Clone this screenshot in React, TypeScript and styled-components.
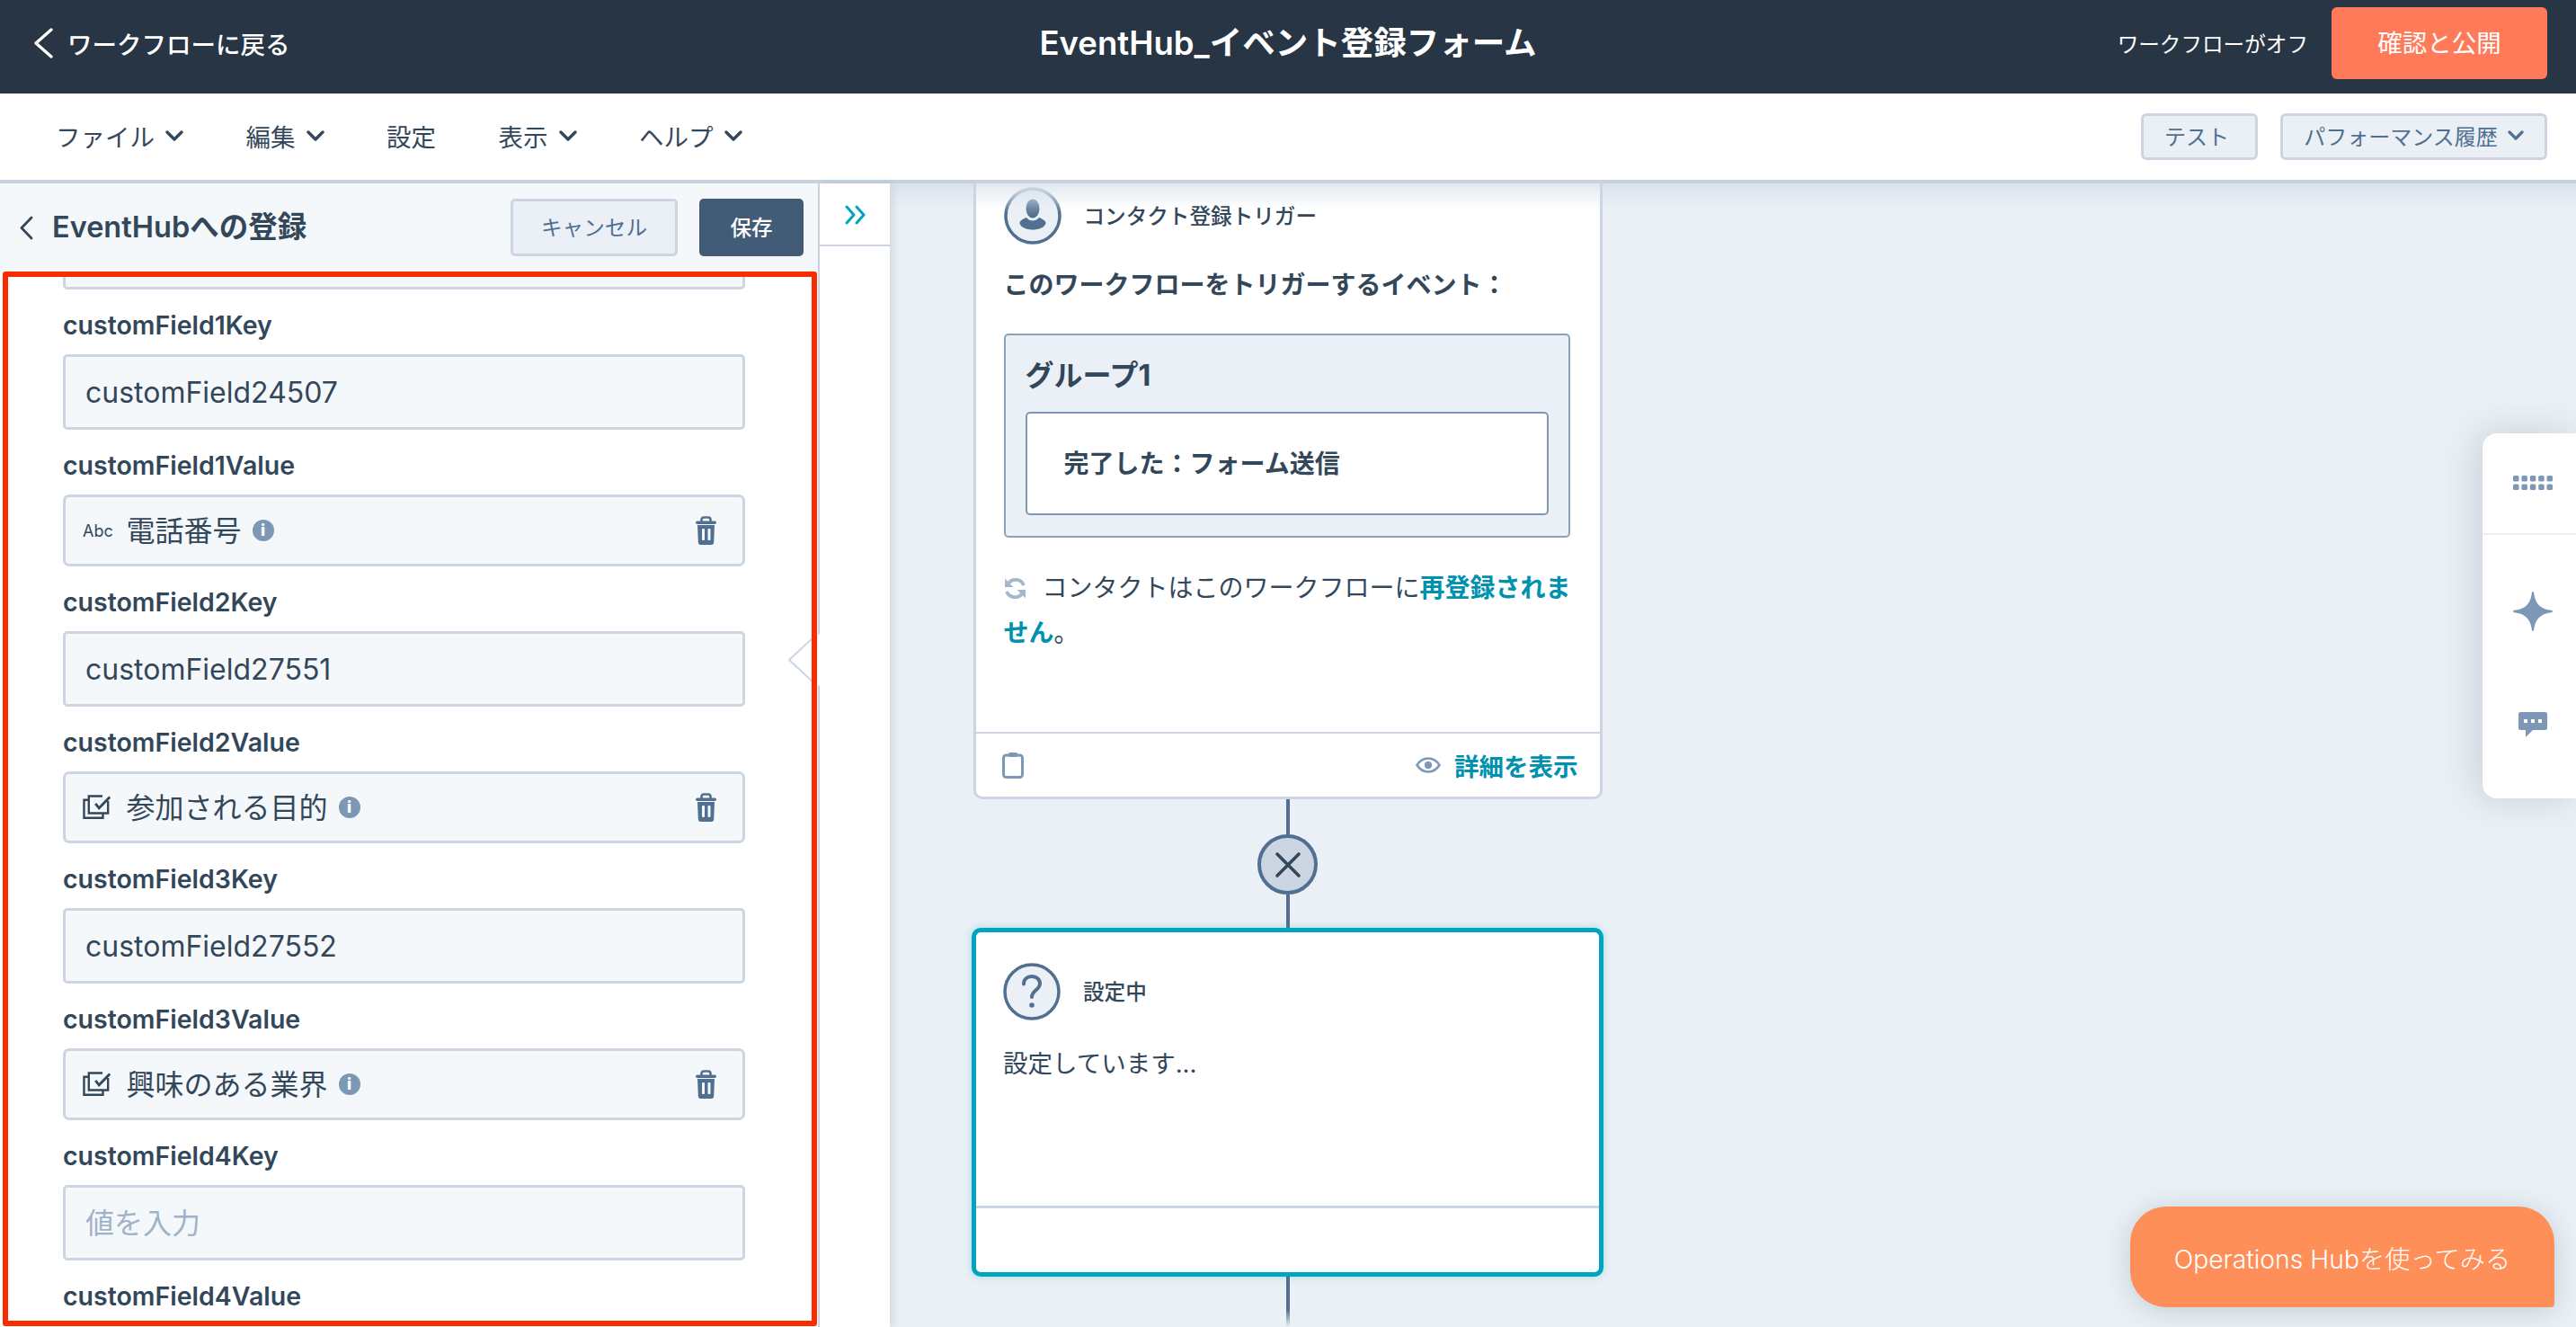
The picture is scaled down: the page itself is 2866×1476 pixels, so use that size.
import React from "react";
import styled, { createGlobalStyle } from "styled-components";

const FONT = `"Inter", "Noto Sans CJK JP", sans-serif`;

const Global = createGlobalStyle`
  html, body { margin: 0; padding: 0; width: 2866px; height: 1476px; overflow: hidden; background: #eaf0f6; }
  #root { width: 2866px; height: 1476px; }
  * { box-sizing: border-box; }
`;

const Page = styled.div`
  width: 2866px;
  height: 1476px;
  display: flex;
  flex-direction: column;
  overflow: hidden;
  font-family: ${FONT};
  color: #33475b;
  font-size: 27.5px;
`;

const TopBar = styled.header`
  height: 104px;
  flex: none;
  background: #283545;
  color: #fff;
  display: grid;
  grid-template-columns: 1fr auto 1fr;
  align-items: center;
  padding: 0 32px 8px 32px;
`;

const BackLink = styled.div`
  display: flex;
  align-items: center;
  gap: 16px;
  font-weight: 500;
  padding-left: 6px;
`;

const WorkflowTitle = styled.h1`
  margin: 0;
  font-size: 36.5px;
  font-weight: 600;
  line-height: 50px;
`;

const TopRight = styled.div`
  display: flex;
  align-items: center;
  justify-content: flex-end;
  gap: 26px;
`;

const StatusText = styled.span`
  font-size: 23.6px;
`;

const PublishButton = styled.button`
  width: 240px;
  height: 80px;
  border: 0;
  border-radius: 6px;
  background: #ff7a59;
  color: #fff;
  font: 400 27.5px ${FONT};
  padding: 0 0 4px;
`;

const NavBar = styled.nav`
  height: 100px;
  flex: none;
  background: #fff;
  border-bottom: 4px solid #c6d3df;
  display: flex;
  align-items: center;
  justify-content: space-between;
  padding: 0 32px 0 62px;
`;

const Menu = styled.div`
  display: flex;
  align-items: center;
  gap: 69.5px;
  padding-bottom: 3px;
`;

const MenuItem = styled.div`
  display: flex;
  align-items: center;
  gap: 12px;
  color: #33475b;
`;

const NavActions = styled.div`
  display: flex;
  gap: 25px;
`;

const GhostButton = styled.button<{ $w: number; $pr?: number }>`
  width: ${(p) => p.$w}px;
  height: 52px;
  border: 3px solid #cbd6e2;
  border-radius: 6px;
  background: #eaf0f6;
  color: #516f90;
  font: 400 24px ${FONT};
  display: flex;
  align-items: center;
  justify-content: center;
  gap: 11px;
  padding: 0 ${(p) => p.$pr ?? 0}px 3px 0;
`;

const Main = styled.div`
  flex: 1;
  min-height: 0;
  display: flex;
`;

const SidePanel = styled.aside`
  width: 912px;
  flex: none;
  position: relative;
  display: flex;
  flex-direction: column;
  background: #fff;
  border-right: 2px solid #cbd6e2;
`;

const PanelHead = styled.div`
  height: 98px;
  flex: none;
  background: #f5f8fa;
  display: flex;
  align-items: center;
  padding: 0 16px 0 22px;
`;

const PanelTitle = styled.h2`
  margin: 0 0 0 21px;
  font-size: 32.5px;
  font-weight: 600;
  line-height: 44px;
  flex: 1;
`;

const CancelButton = styled.button`
  width: 186px;
  height: 64px;
  border: 3px solid #cbd6e2;
  border-radius: 5px;
  background: #eaf0f6;
  color: #516f90;
  font: 400 23.6px ${FONT};
  padding: 0 0 3px;
`;

const SaveButton = styled.button`
  width: 116px;
  height: 64px;
  margin-left: 24px;
  border: 0;
  border-radius: 5px;
  background: #425b76;
  color: #fff;
  font: 500 23.6px ${FONT};
  padding: 0 0 3px;
`;

const PanelBody = styled.div`
  flex: 1;
  min-height: 0;
  overflow: hidden;
  padding: 0 81px 0 70px;
`;

const ScrolledInput = styled.div`
  height: 20px;
  background: #f5f8fa;
  border: 3px solid #cbd6e2;
  border-top: 0;
  border-radius: 0 0 5px 5px;
`;

const FieldLabel = styled.label`
  display: block;
  margin: 20px 0 12px;
  font-size: 28.5px;
  line-height: 40px;
  font-weight: 600;
  color: #33475b;
`;

const TextBox = styled.div<{ $placeholder?: boolean }>`
  height: 84px;
  display: flex;
  align-items: center;
  padding: 0 0 ${(p) => (p.$placeholder ? 5 : 0)}px 22px;
  background: #f5f8fa;
  border: 3px solid #cbd6e2;
  border-radius: 5px;
  font-size: 32px;
  font-weight: 400;
  color: ${(p) => (p.$placeholder ? "#9fb3c8" : "#33475b")};
`;

const TokenBox = styled.div`
  height: 80px;
  display: flex;
  align-items: center;
  padding: 0 29px 0 0;
  background: #f5f8fa;
  border: 3px solid #cbd6e2;
  border-radius: 7px;
  font-size: 32px;
  font-weight: 400;
`;

const TokenIcon = styled.span`
  width: 67.500px;
  padding-left: 19px;
  flex: none;
  display: flex;
  align-items: center;
  font-size: 18px;
  font-weight: 400;
  color: #33475b;
`;

const TokenText = styled.span`
  margin-bottom: 5px;
`;

const InfoDot = styled.span`
  width: 24px;
  height: 24px;
  margin-left: 12px;
  flex: none;
  border-radius: 50%;
  background: #7c98b6;
  color: #fff;
  font-size: 18px;
  font-weight: 800;
  line-height: 24px;
  text-align: center;
`;

const TrashSlot = styled.span`
  margin-left: auto;
  display: flex;
`;

const RedFrame = styled.div`
  position: absolute;
  left: 3px;
  top: 98px;
  width: 906px;
  height: 1173px;
  border: 6px solid #f92c00;
  border-radius: 3px;
  pointer-events: none;
  z-index: 3;
`;

const Pointer = styled.svg`
  position: absolute;
  left: 876px;
  top: 501px;
  z-index: 2;
`;

const CollapseColumn = styled.div`
  width: 78px;
  flex: none;
  background: #fff;
  box-shadow: 4px 0 8px rgba(45, 62, 80, 0.12);
  position: relative;
  z-index: 1;
`;

const CollapseHead = styled.div`
  height: 70px;
  border-bottom: 2px solid #cbd6e2;
  padding: 24px 0 0 28px;
  display: flex;
  align-items: flex-start;
`;

const Canvas = styled.section`
  flex: 1;
  min-width: 0;
  position: relative;
  overflow: hidden;
  background: #eaf0f6;
  padding-left: 91px;
  display: flex;
  flex-direction: column;
`;

const CanvasFade = styled.div`
  position: absolute;
  inset: 0 0 auto 0;
  height: 28px;
  background: linear-gradient(rgba(203, 214, 226, 0.55), rgba(234, 240, 246, 0));
  pointer-events: none;
  z-index: 2;
`;

const Flow = styled.div`
  width: 703px;
  display: flex;
  flex-direction: column;
  align-items: center;
`;

const TriggerCard = styled.article`
  width: 700px;
  height: 685px;
  flex: none;
  background: #fff;
  border: 3px solid #cbd6e2;
  border-top: 0;
  border-radius: 0 0 10px 10px;
  display: flex;
  flex-direction: column;
`;

const TriggerBody = styled.div`
  flex: 1;
  padding: 4px 33px 0 31px;
`;

const CardHead = styled.div`
  height: 64px;
  display: flex;
  align-items: center;
  gap: 25px;
`;

const CardTitle = styled.span`
  font-size: 23.6px;
  font-weight: 500;
  margin-bottom: 2px;
`;

const Intro = styled.p`
  margin: 25px 0 0;
  line-height: 40px;
  font-size: 28px;
  font-weight: 600;
`;

const GroupBox = styled.div`
  margin: 34px 0 0;
  height: 227px;
  background: #eaf0f6;
  border: 2px solid #8aa2bd;
  border-radius: 5px;
  padding: 25px 22px 0;
`;

const GroupTitle = styled.div`
  font-size: 32px;
  line-height: 40px;
  font-weight: 700;
`;

const FilterBox = styled.div`
  margin-top: 20px;
  height: 115px;
  background: #fff;
  border: 2px solid #7c98b6;
  border-radius: 5px;
  display: flex;
  align-items: center;
  padding: 0 0 3px 41px;
  font-size: 28px;
  font-weight: 700;
`;

const Reenroll = styled.p`
  margin: 31px -10px 0 0;
  line-height: 50px;
  font-size: 28px;
  font-weight: 400;
  svg {
    vertical-align: -3px;
    margin-right: 18px;
  }
`;

const TealLink = styled.span`
  color: #0091ae;
  font-weight: 600;
`;

const CardFooter = styled.footer`
  height: 72px;
  flex: none;
  border-top: 2px solid #cbd6e2;
  display: flex;
  align-items: center;
  justify-content: space-between;
  padding: 0 24px 0 29px;
`;

const DetailLink = styled(TealLink)`
  display: flex;
  align-items: center;
  gap: 15px;
`;

const Connector = styled.div<{ $h: number; $fade?: boolean }>`
  width: 4px;
  height: ${(p) => p.$h}px;
  flex: none;
  background: ${(p) => (p.$fade ? "linear-gradient(#516f90 65%, rgba(81,111,144,0))" : "#516f90")};
`;

const CloseNode = styled.div`
  width: 67px;
  height: 67px;
  flex: none;
  border-radius: 50%;
  border: 4px solid #516f90;
  background: #cbd6e2;
  display: flex;
  align-items: center;
  justify-content: center;
`;

const ActiveCard = styled.article`
  width: 703px;
  height: 388px;
  flex: none;
  background: #fff;
  border: 5px solid #00a4bd;
  border-radius: 10px;
  box-shadow: 0 0 10px rgba(0, 164, 189, 0.3);
  display: flex;
  flex-direction: column;
`;

const ActiveBody = styled.div`
  flex: 1;
  padding: 34px 30px 0;
`;

const Pending = styled.p`
  margin: 28px 0 0;
  line-height: 40px;
  font-weight: 400;
`;

const ActiveFooter = styled.div`
  height: 74px;
  flex: none;
  border-top: 3px solid #cbd6e2;
`;

const Dock = styled.div`
  position: absolute;
  right: 0;
  top: 278px;
  width: 104px;
  height: 406px;
  padding-left: 8px;
  background: #fff;
  border-radius: 16px 0 0 16px;
  box-shadow: -6px 0 40px rgba(45, 62, 80, 0.18);
  display: flex;
  flex-direction: column;
  align-items: stretch;
`;

const DockTop = styled.div`
  height: 113px;
  flex: none;
  margin-left: -8px;
  padding: 0 0 2px 8px;
  border-bottom: 2px solid #eaf0f6;
  display: flex;
  align-items: center;
  justify-content: center;
`;

const DockLower = styled.div`
  padding-top: 22px;
`;

const DockItem = styled.div`
  height: 126px;
  display: flex;
  align-items: center;
  justify-content: center;
`;

const TrialButton = styled.button`
  position: absolute;
  right: 24px;
  bottom: 22px;
  width: 472px;
  height: 112px;
  border: 0;
  border-radius: 40px 40px 4px 40px;
  background: #ff8f59;
  color: #fff;
  font: 300 28.3px ${FONT};
  box-shadow: 0 4px 30px rgba(45, 62, 80, 0.2);
  padding: 0;
  z-index: 3;
`;

const Chevron = ({ w = 20, h = 12, color = "#33475b", sw = 3.4 }: { w?: number; h?: number; color?: string; sw?: number }) => (
  <svg width={w} height={h} viewBox={`0 0 ${w} ${h}`} fill="none">
    <path d={`M2 2 L${w / 2} ${h - 2} L${w - 2} 2`} stroke={color} strokeWidth={sw} strokeLinecap="round" strokeLinejoin="round" />
  </svg>
);

const ChevronLeft = ({ w, h, color, sw }: { w: number; h: number; color: string; sw: number }) => (
  <svg width={w} height={h} viewBox={`0 0 ${w} ${h}`} fill="none">
    <path d={`M${w - 2} 2 L2 ${h / 2} L${w - 2} ${h - 2}`} stroke={color} strokeWidth={sw} strokeLinecap="round" strokeLinejoin="round" />
  </svg>
);

const Trash = () => (
  <svg width="23" height="32" viewBox="0 0 23 32">
    <path d="M6.500 6V4a2.500 2.500 0 0 1 2.500-2.500h5A2.500 2.500 0 0 1 16.500 4v2" fill="none" stroke="#516f90" strokeWidth="2.600" />
    <rect x="0" y="5.500" width="23" height="3.600" rx="1.800" fill="#516f90" />
    <path d="M2 10h19l-.8 19a3 3 0 0 1-3 3H5.800a3 3 0 0 1-3-3Z" fill="#516f90" />
    <rect x="7" y="14" width="3" height="13" rx="1" fill="#f5f8fa" />
    <rect x="13.500" y="14" width="3" height="13" rx="1" fill="#f5f8fa" />
  </svg>
);

const CheckboxIcon = () => (
  <svg width="31" height="28" viewBox="0 0 31 28" fill="none" stroke="#33475b" strokeWidth="2.400">
    <path d="M6.800 5.800H1.500V25.800H22.500V21" />
    <path d="M22 1.500H6.800V20.500H28.200V7" />
    <path d="M14.200 9.800l4 5L30.200 2.500" strokeWidth="2.800" />
  </svg>
);

const Person = () => (
  <svg width="64" height="64" viewBox="0 0 64 64">
    <defs>
      <linearGradient id="ring" x1="0" y1="0" x2="0" y2="1">
        <stop offset="0" stopColor="#c5d2df" />
        <stop offset="0.45" stopColor="#516f90" />
      </linearGradient>
      <linearGradient id="head" x1="0" y1="0" x2="0" y2="1">
        <stop offset="0" stopColor="#8ea4bc" />
        <stop offset="0.9" stopColor="#516f90" />
      </linearGradient>
    </defs>
    <circle cx="32" cy="32" r="30" fill="#eaf0f6" stroke="url(#ring)" strokeWidth="3.500" />
    <ellipse cx="32" cy="24" rx="7.500" ry="10.500" fill="url(#head)" />
    <path d="M25 34c2 2.500 4.500 3.500 7 3.500s5-1 7-3.500c4 1.500 7.500 3.500 7.500 6 0 4-7 7.500-14.500 7.500s-14.500-3.500-14.500-7.500c0-2.500 3.500-4.500 7.500-6Z" fill="#516f90" />
  </svg>
);

const Question = () => (
  <svg width="64" height="64" viewBox="0 0 64 64" fill="none">
    <circle cx="32" cy="32" r="30" fill="#eaf0f6" stroke="#516f90" strokeWidth="3.500" />
    <path d="M23 23.500c0-5.500 4-8.500 9-8.500s9 3.500 9 8c0 7-9 7.500-9 15" stroke="#516f90" strokeWidth="4" strokeLinecap="round" />
    <circle cx="32" cy="47" r="2.800" fill="#516f90" />
  </svg>
);

const SyncIcon = () => (
  <svg width="25" height="25" viewBox="0 0 25 25" fill="none" stroke="#a5b7cc" strokeWidth="3.800">
    <path d="M22 9A10 10 0 0 0 5 6.500" />
    <path d="M3 16A10 10 0 0 0 20 18.500" />
    <path d="M1 1.500V11H10.500Z" fill="#a5b7cc" stroke="none" />
    <path d="M24 23.500V14H14.500Z" fill="#a5b7cc" stroke="none" />
  </svg>
);

const ClipboardIcon = () => (
  <svg width="24" height="30" viewBox="0 0 24 30" fill="none">
    <rect x="1.500" y="4" width="21" height="24.500" rx="3" stroke="#7c98b6" strokeWidth="3" />
    <rect x="7" y="1" width="10" height="5" rx="1.500" fill="#7c98b6" />
  </svg>
);

const EyeIcon = () => (
  <svg width="28" height="18" viewBox="0 0 28 18" fill="none">
    <path d="M1.500 9C5 3.500 9.500 1.500 14 1.500S23 3.500 26.500 9C23 14.500 18.500 16.500 14 16.500S5 14.500 1.500 9Z" stroke="#7c98b6" strokeWidth="2.600" />
    <circle cx="14" cy="9" r="4.200" fill="#7c98b6" />
  </svg>
);

const DoubleChevron = () => (
  <svg width="24" height="22" viewBox="0 0 24 22" fill="none" stroke="#00a4bd" strokeWidth="3" strokeLinecap="round" strokeLinejoin="round">
    <path d="M2 2l8 9-8 9" />
    <path d="M13 2l8 9-8 9" />
  </svg>
);

const GridIcon = () => (
  <svg width="44" height="16" viewBox="0 0 44 16" fill="#7c98b6">
    {[0, 9.4, 18.8, 28.2, 37.5].map((x) =>
      [0, 9.5].map((y) => <rect key={`${x}-${y}`} x={x} y={y} width="6.500" height="6.500" rx="1.600" />)
    )}
  </svg>
);

const Sparkle = () => (
  <svg width="44" height="44" viewBox="0 0 44 44" fill="#7c98b6">
    <path d="M22 0c.9 0 1.200 1 1.400 3C24.500 13 31 19.500 41 20.600c2 .2 3 .5 3 1.400s-1 1.200-3 1.400C31 24.500 24.500 31 23.400 41c-.2 2-.5 3-1.400 3s-1.200-1-1.400-3C19.500 31 13 24.500 3 23.400c-2-.2-3-.5-3-1.400s1-1.200 3-1.400C13 19.500 19.500 13 20.600 3c.2-2 .5-3 1.400-3Z" />
  </svg>
);

const ChatIcon = () => (
  <svg width="32" height="28" viewBox="0 0 32 28">
    <path d="M2.500 0h27A2.500 2.500 0 0 1 32 2.500v15a2.500 2.500 0 0 1-2.500 2.500H16l-8 8v-8H2.500A2.500 2.500 0 0 1 0 17.500v-15A2.500 2.500 0 0 1 2.500 0Z" fill="#7c98b6" />
    <rect x="6" y="8" width="4" height="4" fill="#fff" />
    <rect x="14" y="8" width="4" height="4" fill="#fff" />
    <rect x="22" y="8" width="4" height="4" fill="#fff" />
  </svg>
);

type Row =
  | { kind: "text"; label: string; value?: string; placeholder?: string }
  | { kind: "token"; label: string; value: string; icon: "abc" | "check" };

const rows: Row[] = [
  { kind: "text", label: "customField1Key", value: "customField24507" },
  { kind: "token", label: "customField1Value", value: "電話番号", icon: "abc" },
  { kind: "text", label: "customField2Key", value: "customField27551" },
  { kind: "token", label: "customField2Value", value: "参加される目的", icon: "check" },
  { kind: "text", label: "customField3Key", value: "customField27552" },
  { kind: "token", label: "customField3Value", value: "興味のある業界", icon: "check" },
  { kind: "text", label: "customField4Key", placeholder: "値を入力" },
];

const FormRow = ({ row }: { row: Row }) => (
  <div>
    <FieldLabel>{row.label}</FieldLabel>
    {row.kind === "text" ? (
      <TextBox $placeholder={!row.value}>{row.value ?? row.placeholder}</TextBox>
    ) : (
      <TokenBox>
        <TokenIcon>{row.icon === "abc" ? "Abc" : <CheckboxIcon />}</TokenIcon>
        <TokenText>{row.value}</TokenText>
        <InfoDot>i</InfoDot>
        <TrashSlot>
          <Trash />
        </TrashSlot>
      </TokenBox>
    )}
  </div>
);

export default function App() {
  return (
    <Page>
      <Global />
      <TopBar>
        <BackLink>
          <ChevronLeft w={21} h={34} color="#fff" sw={3.4} />
          ワークフローに戻る
        </BackLink>
        <WorkflowTitle>EventHub_イベント登録フォーム</WorkflowTitle>
        <TopRight>
          <StatusText>ワークフローがオフ</StatusText>
          <PublishButton>確認と公開</PublishButton>
        </TopRight>
      </TopBar>
      <NavBar>
        <Menu>
          <MenuItem>ファイル<Chevron /></MenuItem>
          <MenuItem>編集<Chevron /></MenuItem>
          <MenuItem>設定</MenuItem>
          <MenuItem>表示<Chevron /></MenuItem>
          <MenuItem>ヘルプ<Chevron /></MenuItem>
        </Menu>
        <NavActions>
          <GhostButton $w={130} $pr={6}>テスト</GhostButton>
          <GhostButton $w={297}>
            パフォーマンス履歴
            <Chevron w={18} h={11} color="#516f90" sw={3.2} />
          </GhostButton>
        </NavActions>
      </NavBar>
      <Main>
        <SidePanel>
          <PanelHead>
            <ChevronLeft w={15} h={27} color="#33475b" sw={2.8} />
            <PanelTitle>EventHubへの登録</PanelTitle>
            <CancelButton>キャンセル</CancelButton>
            <SaveButton>保存</SaveButton>
          </PanelHead>
          <PanelBody>
            <ScrolledInput />
            {rows.map((row) => (
              <FormRow key={row.label} row={row} />
            ))}
            <FieldLabel>customField4Value</FieldLabel>
          </PanelBody>
          <Pointer width="36" height="58" viewBox="0 0 36 58">
            <path d="M36 0 L1.500 29 L36 58 Z" fill="#fff" />
            <path d="M30 3 L2 29 L30 55" fill="none" stroke="#cbd6e2" strokeWidth="2" />
          </Pointer>
          <RedFrame />
        </SidePanel>
        <CollapseColumn>
          <CollapseHead>
            <DoubleChevron />
          </CollapseHead>
        </CollapseColumn>
        <Canvas>
          <CanvasFade />
          <Flow>
            <TriggerCard>
              <TriggerBody>
                <CardHead>
                  <Person />
                  <CardTitle>コンタクト登録トリガー</CardTitle>
                </CardHead>
                <Intro>このワークフローをトリガーするイベント：</Intro>
                <GroupBox>
                  <GroupTitle>グループ1</GroupTitle>
                  <FilterBox>完了した：フォーム送信</FilterBox>
                </GroupBox>
                <Reenroll>
                  <SyncIcon />
                  コンタクトはこのワークフローに<TealLink>再登録されません</TealLink>。
                </Reenroll>
              </TriggerBody>
              <CardFooter>
                <ClipboardIcon />
                <DetailLink>
                  <EyeIcon />
                  詳細を表示
                </DetailLink>
              </CardFooter>
            </TriggerCard>
            <Connector $h={39} />
            <CloseNode>
              <svg width="30" height="30" viewBox="0 0 30 30" fill="none" stroke="#33475b" strokeWidth="3.6" strokeLinecap="round">
                <path d="M3 3l24 24M27 3L3 27" />
              </svg>
            </CloseNode>
            <Connector $h={37} />
            <ActiveCard>
              <ActiveBody>
                <CardHead>
                  <Question />
                  <CardTitle>設定中</CardTitle>
                </CardHead>
                <Pending>設定しています...</Pending>
              </ActiveBody>
              <ActiveFooter />
            </ActiveCard>
            <Connector $h={56} $fade />
          </Flow>
          <Dock>
            <DockTop>
              <GridIcon />
            </DockTop>
            <DockLower>
              <DockItem>
                <Sparkle />
              </DockItem>
              <DockItem>
                <ChatIcon />
              </DockItem>
            </DockLower>
          </Dock>
          <TrialButton>Operations Hubを使ってみる</TrialButton>
        </Canvas>
      </Main>
    </Page>
  );
}
